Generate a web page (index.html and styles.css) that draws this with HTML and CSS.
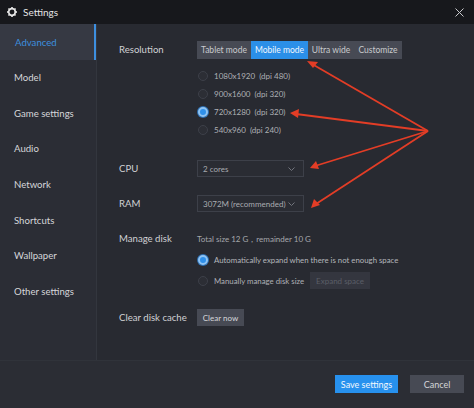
FILE: index.html
```html
<!DOCTYPE html>
<html>
<head>
<meta charset="utf-8">
<link rel="stylesheet" href="styles.css">
</head>
<body>
<div class="window">
  <header class="titlebar">
    <svg class="gear" width="10" height="10" viewBox="0 0 10 10"><circle cx="5" cy="5" r="3.3" fill="none" stroke="#e6e6e6" stroke-width="1.7"/><g fill="#e6e6e6"><rect x="4.2" y="0" width="1.6" height="1.6"/><rect x="4.2" y="8.4" width="1.6" height="1.6"/><rect x="0" y="4.2" width="1.6" height="1.6"/><rect x="8.4" y="4.2" width="1.6" height="1.6"/><g transform="rotate(45 5 5)"><rect x="4.2" y="0" width="1.6" height="1.6"/><rect x="4.2" y="8.4" width="1.6" height="1.6"/><rect x="0" y="4.2" width="1.6" height="1.6"/><rect x="8.4" y="4.2" width="1.6" height="1.6"/></g></g></svg>
    <span class="title">Settings</span>
    <svg class="close" width="9" height="9" viewBox="0 0 9 9"><path d="M0.5 0.5 L8.5 8.5 M8.5 0.5 L0.5 8.5" stroke="#c8c9cc" stroke-width="1"/></svg>
  </header>
  <div class="body">
    <nav class="sidebar">
      <div class="nav-item active">Advanced</div>
      <div class="nav-item">Model</div>
      <div class="nav-item">Game settings</div>
      <div class="nav-item">Audio</div>
      <div class="nav-item">Network</div>
      <div class="nav-item">Shortcuts</div>
      <div class="nav-item">Wallpaper</div>
      <div class="nav-item">Other settings</div>
    </nav>
    <main class="content">
      <div class="row row-res">
        <div class="label">Resolution</div>
        <div class="ctrl">
          <div class="segmented">
            <span class="seg s1">Tablet mode</span>
            <span class="seg s2 on">Mobile mode</span>
            <span class="seg s3">Ultra wide</span>
            <span class="seg s4">Customize</span>
          </div>
          <ul class="radios">
            <li><span class="radio"></span>1080x1920&nbsp; (dpi 480)</li>
            <li><span class="radio"></span>900x1600&nbsp; (dpi 320)</li>
            <li class="sel"><span class="radio checked"></span>720x1280&nbsp; (dpi 320)</li>
            <li><span class="radio"></span>540x960&nbsp; (dpi 240)</li>
          </ul>
        </div>
      </div>
      <div class="row row-cpu">
        <div class="label">CPU</div>
        <div class="select"><span>2 cores</span><svg width="7" height="4" viewBox="0 0 7 4"><path d="M0.5 0.5 L3.5 3.5 L6.5 0.5" fill="none" stroke="#7b7e86" stroke-width="0.9"/></svg></div>
      </div>
      <div class="row row-ram">
        <div class="label">RAM</div>
        <div class="select"><span>3072M (recommended)</span><svg width="7" height="4" viewBox="0 0 7 4"><path d="M0.5 0.5 L3.5 3.5 L6.5 0.5" fill="none" stroke="#7b7e86" stroke-width="0.9"/></svg></div>
      </div>
      <div class="row row-disk">
        <div class="label">Manage disk</div>
        <div class="ctrl">
          <div class="disk-info">Total size 12 G，remainder 10 G</div>
          <ul class="radios disk">
            <li class="sel2"><span class="radio checked"></span>Automatically expand when there is not enough space</li>
            <li><span class="radio"></span>Manually manage disk size<span class="btn btn-disabled">Expand space</span></li>
          </ul>
        </div>
      </div>
      <div class="row row-cache">
        <div class="label">Clear disk cache</div>
        <span class="btn btn-gray">Clear now</span>
      </div>
    </main>
  </div>
  <footer class="footer">
    <span class="btn btn-save">Save settings</span>
    <span class="btn btn-cancel">Cancel</span>
  </footer>
  <svg class="arrows" width="474" height="408" viewBox="0 0 474 408">
    <g stroke="#e33d26" stroke-width="1.8" fill="none">
      <line x1="428" y1="131" x2="312" y2="64"/>
      <line x1="428" y1="131" x2="296" y2="114"/>
      <line x1="428" y1="131" x2="315" y2="166"/>
      <line x1="428" y1="131" x2="316" y2="204"/>
    </g>
    <g fill="#e33d26">
      <path d="M307 61 L318 62 L313 68 Z"/>
      <path d="M290 113 L299 109 L298 118 Z"/>
      <path d="M310 168 L316 161 L319 169 Z"/>
      <path d="M311 208 L314 199 L320 205 Z"/>
    </g>
  </svg>
</div>
</body>
</html>
```
FILE: styles.css
```css
* { box-sizing: border-box; margin: 0; padding: 0; }
html, body { width: 474px; height: 408px; overflow: hidden; background: #282a31; }
body { font-family: "Lato", "Noto Sans", "DejaVu Sans", sans-serif; color: #c9cacd; white-space: nowrap; }
.window { position: relative; width: 474px; height: 408px; display: flex; flex-direction: column; background: #282a31; }
.titlebar { height: 24px; background: #17181c; display: flex; align-items: center; padding-left: 7px; padding-right: 10px; flex: none; }
.gear { margin-right: 6px; margin-top: 0; }
.title { font-size: 10px; color: #e4e4e6; }
.close { margin-left: auto; }
.body { flex: 1; display: flex; min-height: 0; }
.sidebar { width: 97px; flex: none; background: #2b2d35; border-right: 1px solid #33363e; }
.nav-item { height: 35.6px; display: flex; align-items: center; padding-left: 14px; font-size: 9.6px; color: #d5d6d9; }
.nav-item.active { background: #363943; color: #3d8fdf; padding-left: 15px; box-shadow: inset -2px 0 0 #3d8fdf; height: 36px; }
.content { flex: 1; padding: 17px 0 0 22px; background: #282a31; }
.row { display: flex; }
.label { width: 78px; flex: none; font-size: 9.6px; color: #d0d1d4; }
.row-res .label { line-height: 18px; }
.segmented { display: flex; height: 18px; background: #474a54; width: 205px; }
.seg { font-size: 8.5px; color: #c9cace; line-height: 18px; text-align: center; }
.s1 { width: 54px; }
.s2 { width: 57px; }
.s3 { width: 46px; }
.s4 { width: 48px; }
.seg.on { background: #2b8fe8; color: #f0f6fd; }
.radios { list-style: none; margin-top: 8px; }
.radios li { height: 18px; display: flex; align-items: center; font-size: 8px; color: #aeb0b5; }
.radio { width: 10px; height: 10px; border-radius: 50%; border: 1px solid #3d4049; background: #2c2e35; margin: 0 6px 0 1px; flex: none; }
.radio.checked { background: #2f90ea; border: 2px solid #8ec3f3; box-shadow: 0 0 0 1px #2f6fb0; }
.row-cpu { margin-top: 21px; align-items: center; }
.row-ram { margin-top: 18px; align-items: center; }
.select { width: 107px; height: 17px; border: 1px solid #3d4049; background: #2a2c33; display: flex; align-items: center; justify-content: space-between; padding: 0 8px 0 5px; font-size: 8px; color: #a9abb0; }
.row-disk { margin-top: 19px; }
.row-disk .label { line-height: 16px; }
.disk-info { font-size: 8px; color: #a5a7ac; line-height: 16px; }
.radios.disk { margin-top: 2px; }
.radios.disk li { height: 21px; font-size: 7.8px; }
.radios.disk li.sel2 { color: #b4b6bb; }
.btn { display: inline-flex; align-items: center; justify-content: center; font-size: 8px; }
.btn-disabled { margin-left: 6px; width: 60px; height: 17px; background: #34363f; color: #5b5e67; }
.row-cache { margin-top: 18px; align-items: center; }
.btn-gray { width: 47px; height: 17px; background: #474a54; color: #d7d8db; }
.footer { height: 48px; flex: none; background: #2b2d34; border-top: 1px solid #30333a; display: flex; align-items: center; justify-content: flex-end; padding-right: 10px; gap: 12px; padding-bottom: 1px; }
.btn-save { width: 63px; height: 18px; background: #2791ee; color: #f2f7fd; font-size: 9px; }
.btn-cancel { width: 54px; height: 18px; background: #474a54; color: #d5d6d9; font-size: 9px; }
.arrows { position: absolute; left: 0; top: 0; pointer-events: none; }
```
